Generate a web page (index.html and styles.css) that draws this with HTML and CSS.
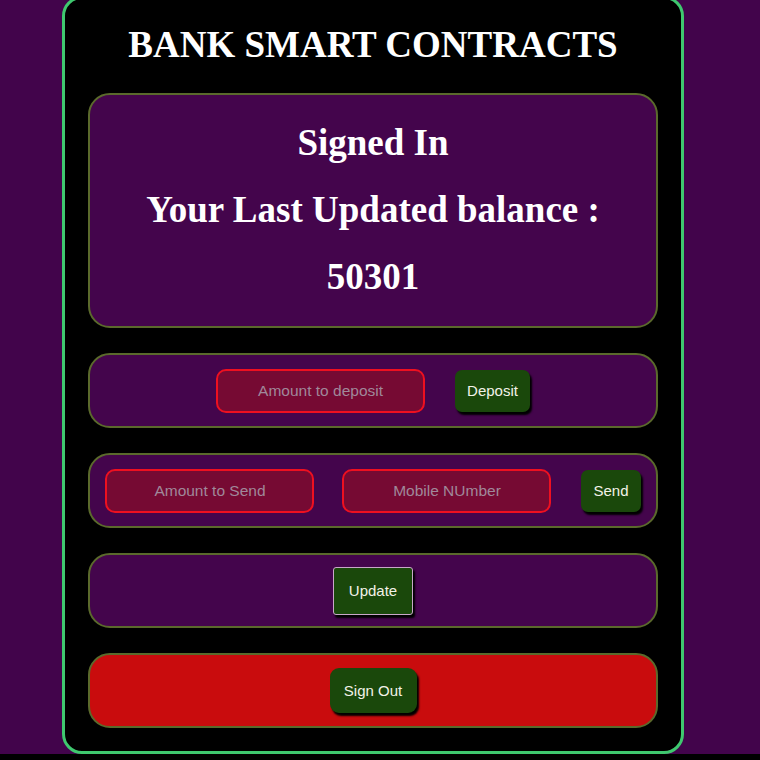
FILE: index.html
```html
<!DOCTYPE html>
<html>
<head>
<meta charset="utf-8">
<link rel="stylesheet" href="styles.css">
</head>
<body>
<div class="card">
  <h1 class="title">BANK SMART CONTRACTS</h1>
  <section class="panel info">
    <h2 class="line">Signed In</h2>
    <h2 class="line">Your Last Updated balance :</h2>
    <h2 class="line">50301</h2>
  </section>
  <section class="panel row">
    <input class="field" type="text" placeholder="Amount to deposit">
    <button class="btn">Deposit</button>
  </section>
  <section class="panel row send-row">
    <input class="field" type="text" placeholder="Amount to Send">
    <input class="field" type="text" placeholder="Mobile NUmber">
    <button class="btn">Send</button>
  </section>
  <section class="panel row">
    <button class="btn btn-update">Update</button>
  </section>
  <section class="panel row danger">
    <button class="btn btn-signout">Sign Out</button>
  </section>
</div>
</body>
</html>
```
FILE: styles.css
```css
html {
  background: #000;
  margin: 0;
  padding: 0;
}
body {
  margin: 0;
  height: 754px;
  overflow: hidden;
  background: #42044b;
  font-family: "Liberation Serif", "Times New Roman", serif;
}
.card {
  box-sizing: border-box;
  width: 622px;
  height: 758px;
  margin: -4px 0 0 62px;
  background: #000;
  border: 3px solid #3fc86f;
  border-radius: 20px;
  padding: 0 23px 23px;
  display: flex;
  flex-direction: column;
  gap: 25px;
}
.title {
  margin: 0;
  padding-top: 22px;
  line-height: 48px;
  height: 48px;
  margin-bottom: -1px;
  text-align: center;
  color: #fff;
  font-size: 37px;
  font-weight: bold;
}
.panel {
  box-sizing: border-box;
  background: #44054c;
  border: 2.5px solid #5b6a2c;
  border-radius: 22px;
}
.info {
  height: 235px;
  padding: 14px 10px;
  display: flex;
  flex-direction: column;
  align-items: center;
}
.line {
  margin: 0;
  color: #fff;
  font-size: 37px;
  font-weight: bold;
  line-height: 67px;
}
.row {
  height: 75px;
  padding: 0 12px;
  display: flex;
  align-items: center;
  justify-content: center;
  gap: 30px;
}
.send-row {
  gap: 28px;
}
.send-row .btn {
  margin-left: 2px;
}
.danger {
  background: #c90c0d;
}
.field {
  box-sizing: border-box;
  width: 209px;
  height: 44px;
  border: 2.5px solid #ee1020;
  border-radius: 10px;
  background: #760a33;
  color: #ddd;
  text-align: center;
  font-family: "Liberation Sans", Arial, sans-serif;
  font-size: 15.5px;
  outline: none;
}
.field::placeholder {
  color: #a0889a;
}
.btn {
  box-sizing: border-box;
  height: 42px;
  padding: 0 12px;
  border: none;
  border-radius: 7px;
  background: #1a480b;
  color: #f2f2e8;
  font-family: "Liberation Sans", Arial, sans-serif;
  font-size: 15px;
  box-shadow: 2px 3px 2px #000;
}
.btn-update {
  height: 48px;
  width: 80px;
  border: 1.5px solid #c9a6c9;
  border-radius: 3px;
}
.btn-signout {
  height: 45px;
  width: 87px;
  border-radius: 9px;
}
```
